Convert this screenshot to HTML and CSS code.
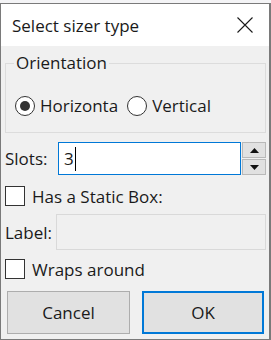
FILE: index.html
```html
<!DOCTYPE html>
<html>
<head>
<meta charset="utf-8">
<link rel="stylesheet" href="styles.css">
</head>
<body>
<div class="strip"></div>
<div class="dialog">
  <div class="titlebar">
    <span class="title">Select sizer type</span>
    <svg class="close" width="16" height="16" viewBox="0 0 16 16"><path d="M0.5 0.5 L15.5 15.5 M15.5 0.5 L0.5 15.5" stroke="#1a1a1a" stroke-width="1.1" fill="none"/></svg>
  </div>
  <div class="body">
    <fieldset class="group">
      <legend>Orientation</legend>
      <div class="radios">
        <label class="opt"><span class="radio checked"></span>Horizonta</label>
        <label class="opt"><span class="radio"></span>Vertical</label>
      </div>
    </fieldset>
    <div class="slots-row">
      <span class="lbl">Slots:</span>
      <div class="field focused"><span>3</span><span class="caret"></span></div>
      <div class="spin">
        <div class="spin-btn"><svg width="9" height="5" viewBox="0 0 9 5"><path d="M0 5 L4.5 0 L9 5 Z" fill="#111"/></svg></div>
        <div class="spin-btn"><svg width="9" height="5" viewBox="0 0 9 5"><path d="M0 0 L4.5 5 L9 0 Z" fill="#111"/></svg></div>
      </div>
    </div>
    <label class="check-row first"><span class="box"></span>Has a Static Box:</label>
    <div class="label-row">
      <span class="lbl">Label:</span>
      <div class="field disabled"></div>
    </div>
    <label class="check-row second"><span class="box"></span>Wraps around</label>
    <div class="buttons">
      <div class="btn">Cancel</div>
      <div class="btn default">OK</div>
    </div>
  </div>
</div>
</body>
</html>
```
FILE: styles.css
```css
* { box-sizing: border-box; }
html, body { margin: 0; padding: 0; }
body {
  width: 271px;
  height: 340px;
  overflow: hidden;
  background: #ffffff;
  font-family: "Open Sans", "Noto Sans", sans-serif;
  font-size: 17px;
  color: #1a1a1a;
}
.strip {
  height: 3px;
  background: #f4f4f6;
}
.dialog {
  width: 271px;
  height: 337px;
  border: 1px solid #7a7a7a;
  border-right-width: 2px;
  background: #f0f0f0;
  display: flex;
  flex-direction: column;
}
.titlebar {
  height: 42px;
  background: #ffffff;
  display: flex;
  align-items: center;
  justify-content: space-between;
  padding: 0 16px 0 11px;
  flex: none;
}
.title { font-size: 17px; }
.close { display: block; }
.body {
  flex: 1;
  padding: 0 3px 0 4px;
  display: flex;
  flex-direction: column;
}
.group {
  margin: 6px 0 0 0;
  padding: 0 0 0 9px;
  border: 1px solid #dcdcdc;
  height: 81px;
  min-width: 0;
}
.group legend {
  padding: 0 2px;
  margin-left: -1px;
  line-height: 22px;
}
.radios {
  display: flex;
  gap: 9px;
  margin-top: 20px;
}
.opt {
  display: flex;
  align-items: center;
  gap: 5px;
}
.radio {
  width: 20px;
  height: 20px;
  border: 1px solid #333;
  border-radius: 50%;
  background: #fff;
  display: flex;
  align-items: center;
  justify-content: center;
}
.radio.checked::after {
  content: "";
  width: 10px;
  height: 10px;
  border-radius: 50%;
  background: #333;
}
.slots-row {
  display: flex;
  align-items: center;
  margin-top: 9px;
  height: 33px;
}
.lbl { flex: none; }
.slots-row .lbl { width: 53px; }
.field {
  height: 33px;
  display: flex;
  align-items: center;
  background: #fff;
}
.field.focused {
  width: 184px;
  border: 1px solid #0078d7;
  padding-left: 5px;
}
.caret {
  width: 1px;
  height: 24px;
  background: #000;
  margin-left: 1px;
}
.spin {
  margin-left: 1px;
  display: flex;
  flex-direction: column;
  gap: 1px;
}
.spin-btn {
  width: 24px;
  height: 16px;
  background: #e1e1e1;
  border: 1px solid #b9b9b9;
  display: flex;
  align-items: center;
  justify-content: center;
}
.check-row {
  display: flex;
  align-items: center;
  gap: 7px;
  height: 20px;
}
.check-row.first { margin-top: 11px; }
.check-row.second { margin-top: 9px; }
.box {
  width: 20px;
  height: 20px;
  border: 1px solid #333;
  background: #fff;
}
.label-row {
  display: flex;
  align-items: center;
  margin-top: 8px;
  height: 36px;
}
.label-row .lbl { width: 51px; }
.field.disabled {
  flex: 1;
  height: 36px;
  background: #f0f0f0;
  border: 1px solid #d9d9d9;
}
.buttons {
  display: flex;
  justify-content: space-between;
  margin-top: 12px;
  padding: 0 2px 0 2px;
}
.btn {
  width: 123px;
  height: 43px;
  background: #e1e1e1;
  border: 1px solid #adadad;
  display: flex;
  align-items: center;
  justify-content: center;
}
.btn.default {
  width: 122px;
  border: 2px solid #0078d7;
}
```
